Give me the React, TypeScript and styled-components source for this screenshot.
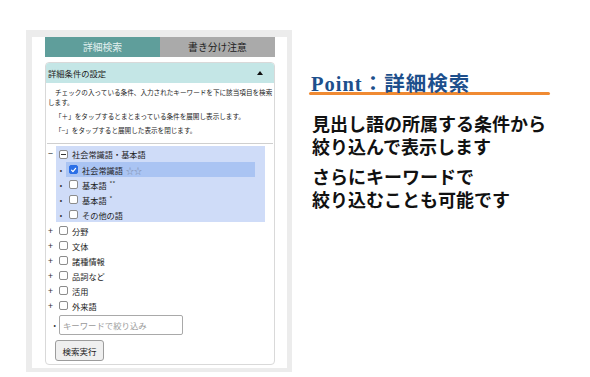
import styled, { createGlobalStyle } from "styled-components";

const GlobalStyle = createGlobalStyle`
  body {
    margin: 0;
    background: #fff;
    font-family: "Noto Sans CJK JP", "Noto Sans", sans-serif;
  }
`;

const groupChildren = [
  { label: "社会常識語", mark: "☆☆", checked: true },
  { label: "基本語", mark: "**", checked: false },
  { label: "基本語", mark: "*", checked: false },
  { label: "その他の語", mark: "", checked: false },
];

const closedRows = ["分野", "文体", "諸種情報", "品詞など", "活用", "外来語"];

export default function App() {
  return (
    <>
      <GlobalStyle />
      <Page>
        <Frame>
          <Screen>
            <Tabs>
              <Tab $active>詳細検索</Tab>
              <Tab>書き分け注意</Tab>
            </Tabs>
            <Box>
              <BoxHeader>
                <span>詳細条件の設定</span>
                <Arrow />
              </BoxHeader>
              <Desc>
                <p>チェックの入っている条件、入力されたキーワードを下に該当項目を検索します。</p>
                <p>「＋」をタップするとまとまっている条件を展開し表示します。</p>
                <p>「−」をタップすると展開した表示を閉じます。</p>
              </Desc>
              <Divider />
              <Tree>
                <Group>
                  <Sign>−</Sign>
                  <GroupBody>
                    <GroupHead>
                      <Check $mode="mixed" />
                      <Label>社会常識語・基本語</Label>
                    </GroupHead>
                    {groupChildren.map((c) => (
                      <ChildRow key={c.label + c.mark}>
                        <Bullet>•</Bullet>
                        <ChildItem $selected={c.checked}>
                          <Check $mode={c.checked ? "on" : "off"}>
                            {c.checked && (
                              <svg width="10" height="10" viewBox="0 0 10 10">
                                <path
                                  d="M2.2 5.2 L4.2 7.3 L8 2.6"
                                  fill="none"
                                  stroke="#fff"
                                  strokeWidth="1.7"
                                  strokeLinecap="round"
                                  strokeLinejoin="round"
                                />
                              </svg>
                            )}
                          </Check>
                          <Label>
                            {c.label}
                            {c.mark && <Mark $star={c.mark.startsWith("☆")}>{c.mark}</Mark>}
                          </Label>
                        </ChildItem>
                      </ChildRow>
                    ))}
                  </GroupBody>
                </Group>
                <ClosedList>
                  {closedRows.map((r) => (
                    <Row key={r}>
                      <Sign>+</Sign>
                      <Check $mode="off" />
                      <Label>{r}</Label>
                    </Row>
                  ))}
                </ClosedList>
                <InputRow>
                  <InputBullet>•</InputBullet>
                  <Keyword placeholder="キーワードで絞り込み" />
                </InputRow>
                <SearchButton>検索実行</SearchButton>
              </Tree>
            </Box>
          </Screen>
        </Frame>

        <Side>
          <Title>Point：詳細検索</Title>
          <Underline />
          <Body>
            <p>
              見出し語の所属する条件から
              <br />
              絞り込んで表示します
            </p>
            <p>
              さらにキーワードで
              <br />
              絞り込むことも可能です
            </p>
          </Body>
        </Side>
      </Page>
    </>
  );
}

const Page = styled.div`
  display: flex;
  align-items: flex-start;
  gap: 17px;
  padding: 30px 0 0 26px;
`;

const Frame = styled.div`
  width: 266px;
  height: 342px;
  box-sizing: border-box;
  background: #ececec;
  padding: 7px 5px 4px 6px;
`;

const Screen = styled.div`
  height: 100%;
  box-sizing: border-box;
  background: #fff;
  padding: 0 12px 3px 13px;
  display: flex;
  flex-direction: column;
`;

const Tabs = styled.div`
  display: grid;
  grid-template-columns: 1fr 1fr;
  height: 20px;
`;

const Tab = styled.div<{ $active?: boolean }>`
  display: flex;
  align-items: center;
  justify-content: center;
  font-size: 9.8px;
  background: ${(p) => (p.$active ? "#5f9e9b" : "#aaaaaa")};
  color: ${(p) => (p.$active ? "#e3f0ef" : "#1c1c1c")};
`;

const Box = styled.div`
  flex: 1;
  margin-top: 5px;
  border: 1px solid #d9d9d9;
  border-radius: 4px;
  overflow: hidden;
`;

const BoxHeader = styled.div`
  height: 20px;
  display: flex;
  align-items: center;
  justify-content: space-between;
  padding: 0 11px 0 2px;
  background: #c4e6e6;
  font-size: 8.3px;
  color: #222;
`;

const Arrow = styled.span`
  width: 0;
  height: 0;
  border-left: 3.5px solid transparent;
  border-right: 3.5px solid transparent;
  border-bottom: 4px solid #111;
`;

const Desc = styled.div`
  padding: 4px 1px 0 2px;

  p {
    margin: 0 0 4px;
    font-size: 6.6px;
    line-height: 10px;
    text-indent: 7px;
    color: #222;
  }
  p:last-child {
    margin-bottom: 0;
  }
`;

const Divider = styled.div`
  height: 1px;
  margin: 8px 1px 0;
  background: #cfcfcf;
`;

const Tree = styled.div`
  padding: 2px 0 0 2px;
  font-size: 8.2px;
  color: #222;
`;

const Group = styled.div`
  display: flex;
  align-items: flex-start;
`;

const Sign = styled.span`
  width: 8px;
  height: 15px;
  line-height: 15px;
  font-size: 9px;
  color: #333;
  flex-shrink: 0;
`;

const GroupBody = styled.div`
  width: 209px;
  background: #cfdcf8;
`;

const GroupHead = styled.div`
  height: 16px;
  display: flex;
  align-items: center;
  padding-left: 3px;
`;

const Check = styled.span<{ $mode: "on" | "off" | "mixed" }>`
  position: relative;
  width: 9px;
  height: 9px;
  box-sizing: border-box;
  border-radius: 2px;
  flex-shrink: 0;
  margin-right: 3px;
  display: flex;
  align-items: center;
  justify-content: center;
  background: ${(p) => (p.$mode === "on" ? "#2b6fe6" : "#fff")};
  border: 1px solid ${(p) => (p.$mode === "on" ? "#2b6fe6" : "#8c8c8c")};

  &::after {
    content: "";
    display: ${(p) => (p.$mode === "mixed" ? "block" : "none")};
    width: 5px;
    height: 1px;
    background: #333;
  }
`;

const Label = styled.span`
  white-space: nowrap;
  margin-left: 1px;
`;

const Mark = styled.span<{ $star: boolean }>`
  margin-left: 3px;
  color: ${(p) => (p.$star ? "#7d8aa6" : "#333")};
  font-size: ${(p) => (p.$star ? "8px" : "6px")};
  vertical-align: ${(p) => (p.$star ? "baseline" : "3px")};
`;

const ChildRow = styled.div`
  display: flex;
  align-items: center;
  height: 15px;
`;

const Bullet = styled.span`
  width: 10px;
  text-align: center;
  font-size: 7px;
  color: #333;
`;

const ChildItem = styled.div<{ $selected: boolean }>`
  width: 189px;
  height: 15px;
  display: flex;
  align-items: center;
  padding-left: 3px;
  box-sizing: border-box;
  background: ${(p) => (p.$selected ? "#aac4f3" : "transparent")};
`;

const ClosedList = styled.div`
  margin-top: 1px;
`;

const Row = styled.div`
  display: flex;
  align-items: center;
  height: 15px;

  ${Check} {
    margin-left: 3px;
  }
`;

const InputRow = styled.div`
  display: flex;
  align-items: center;
  margin-top: 2px;
`;

const InputBullet = styled.span`
  width: 11px;
  text-align: right;
  padding-right: 3px;
  box-sizing: border-box;
  font-size: 7px;
  color: #333;
`;

const Keyword = styled.input`
  width: 124px;
  height: 20px;
  box-sizing: border-box;
  border: 1px solid #a9a9a9;
  border-radius: 2px;
  padding: 0 3px;
  font-family: "Noto Sans CJK JP", sans-serif;
  font-size: 8.4px;
  outline: none;

  &::placeholder {
    color: #9a9a9a;
  }
`;

const SearchButton = styled.button`
  display: block;
  margin: 5px 0 0 7px;
  width: 49px;
  height: 21px;
  padding: 0;
  border: 1px solid #9c9c9c;
  border-radius: 3px;
  background: #efefef;
  font-family: "Noto Sans CJK JP", sans-serif;
  font-size: 8.5px;
  color: #222;
`;

const Side = styled.div`
  width: 245px;
  padding-top: 43px;
`;

const Title = styled.div`
  padding-left: 2px;
  font-family: "Liberation Serif", "Noto Sans CJK JP", serif;
  font-weight: 700;
  font-size: 20.5px;
  line-height: 22px;
  letter-spacing: 1px;
  color: #1d4f8c;
  white-space: nowrap;
`;

const Underline = styled.div`
  width: 241px;
  height: 3px;
  margin-top: -3px;
  border-radius: 2px;
  background: #f08a32;
`;

const Body = styled.div`
  margin-top: 17px;
  padding-left: 3px;
  font-family: "Noto Sans CJK JP", sans-serif;
  font-weight: 700;
  font-size: 18px;
  line-height: 23px;
  color: #111;

  p {
    margin: 0 0 7px;
    white-space: nowrap;
  }
`;
